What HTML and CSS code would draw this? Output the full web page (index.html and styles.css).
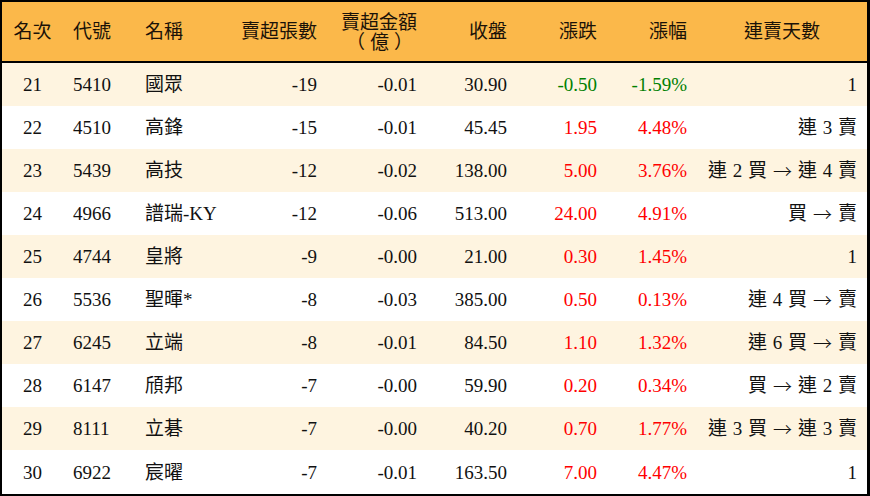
FILE: index.html
```html
<!DOCTYPE html>
<html lang="zh-Hant">
<head>
<meta charset="utf-8">
<title>賣超排行</title>
<link rel="stylesheet" href="styles.css">
</head>
<body>
<div class="board">
  <div class="row head">
    <div class="c center">名次</div>
    <div class="c left">代號</div>
    <div class="c left">名稱</div>
    <div class="c right">賣超張數</div>
    <div class="c right two">賣超金額<br><span class="sub">（億）</span></div>
    <div class="c right">收盤</div>
    <div class="c right">漲跌</div>
    <div class="c right">漲幅</div>
    <div class="c center">連賣天數</div>
  </div>
  <div class="row alt">
    <div class="c center">21</div><div class="c left">5410</div><div class="c left">國眾</div>
    <div class="c right">-19</div><div class="c right">-0.01</div><div class="c right">30.90</div>
    <div class="c right down">-0.50</div><div class="c right down">-1.59%</div><div class="c right">1</div>
  </div>
  <div class="row">
    <div class="c center">22</div><div class="c left">4510</div><div class="c left">高鋒</div>
    <div class="c right">-15</div><div class="c right">-0.01</div><div class="c right">45.45</div>
    <div class="c right up">1.95</div><div class="c right up">4.48%</div><div class="c right days">連 3 賣</div>
  </div>
  <div class="row alt">
    <div class="c center">23</div><div class="c left">5439</div><div class="c left">高技</div>
    <div class="c right">-12</div><div class="c right">-0.02</div><div class="c right">138.00</div>
    <div class="c right up">5.00</div><div class="c right up">3.76%</div><div class="c right days">連 2 買<span class="arr">→</span>連 4 賣</div>
  </div>
  <div class="row">
    <div class="c center">24</div><div class="c left">4966</div><div class="c left">譜瑞-KY</div>
    <div class="c right">-12</div><div class="c right">-0.06</div><div class="c right">513.00</div>
    <div class="c right up">24.00</div><div class="c right up">4.91%</div><div class="c right days">買<span class="arr">→</span>賣</div>
  </div>
  <div class="row alt">
    <div class="c center">25</div><div class="c left">4744</div><div class="c left">皇將</div>
    <div class="c right">-9</div><div class="c right">-0.00</div><div class="c right">21.00</div>
    <div class="c right up">0.30</div><div class="c right up">1.45%</div><div class="c right">1</div>
  </div>
  <div class="row">
    <div class="c center">26</div><div class="c left">5536</div><div class="c left">聖暉*</div>
    <div class="c right">-8</div><div class="c right">-0.03</div><div class="c right">385.00</div>
    <div class="c right up">0.50</div><div class="c right up">0.13%</div><div class="c right days">連 4 買<span class="arr">→</span>賣</div>
  </div>
  <div class="row alt">
    <div class="c center">27</div><div class="c left">6245</div><div class="c left">立端</div>
    <div class="c right">-8</div><div class="c right">-0.01</div><div class="c right">84.50</div>
    <div class="c right up">1.10</div><div class="c right up">1.32%</div><div class="c right days">連 6 買<span class="arr">→</span>賣</div>
  </div>
  <div class="row">
    <div class="c center">28</div><div class="c left">6147</div><div class="c left">頎邦</div>
    <div class="c right">-7</div><div class="c right">-0.00</div><div class="c right">59.90</div>
    <div class="c right up">0.20</div><div class="c right up">0.34%</div><div class="c right days">買<span class="arr">→</span>連 2 賣</div>
  </div>
  <div class="row alt">
    <div class="c center">29</div><div class="c left">8111</div><div class="c left">立碁</div>
    <div class="c right">-7</div><div class="c right">-0.00</div><div class="c right">40.20</div>
    <div class="c right up">0.70</div><div class="c right up">1.77%</div><div class="c right days">連 3 買<span class="arr">→</span>連 3 賣</div>
  </div>
  <div class="row last">
    <div class="c center">30</div><div class="c left">6922</div><div class="c left">宸曜</div>
    <div class="c right">-7</div><div class="c right">-0.01</div><div class="c right">163.50</div>
    <div class="c right up">7.00</div><div class="c right up">4.47%</div><div class="c right">1</div>
  </div>
</div>
</body>
</html>
```

FILE: styles.css
```css
html, body {
  margin: 0;
  padding: 0;
  background: #ffffff;
}

.board {
  width: 870px;
  height: 496px;
  box-sizing: border-box;
  border: 2px solid #000;
  border-right-width: 3px;
  border-bottom-width: 2px;
  background: #ffffff;
  font-family: "Liberation Serif", "Noto Sans CJK TC", serif;
  font-size: 19px;
  color: #111;
  display: flex;
  flex-direction: column;
}

.row {
  display: grid;
  grid-template-columns: 61px 72px 95px 97px 100px 90px 90px 90px 170px;
  height: 43px;
  flex: 0 0 auto;
  background: #ffffff;
}

.row.alt {
  background: #fef4e0;
}

.row.last {
  flex: 1 1 auto;
}

.row.head {
  height: 59px;
  background: #fbb84a;
  border-bottom: 2px solid #000;
  color: #1a1208;
}

.c {
  display: flex;
  align-items: center;
  padding: 0 10px;
  white-space: nowrap;
  line-height: 19px;
}

.c.center {
  justify-content: center;
  padding: 0;
}

.c.left {
  justify-content: flex-start;
}

.c.right {
  justify-content: flex-end;
}

.c.days {
  word-spacing: 1px;
}

.c.days .arr {
  font-family: "Noto Sans CJK TC", sans-serif;
  font-weight: 300;
  margin: 0 6px;
}

.c.two {
  flex-direction: column;
  justify-content: center;
  align-items: flex-end;
  text-align: center;
  padding-top: 2px;
}

.c.two .sub {
  display: block;
  width: 76px;
  text-align: center;
  margin-top: 1px;
  letter-spacing: 5px;
  text-indent: 5px;
}

.up {
  color: #ff0000;
}

.down {
  color: #008000;
}
```
